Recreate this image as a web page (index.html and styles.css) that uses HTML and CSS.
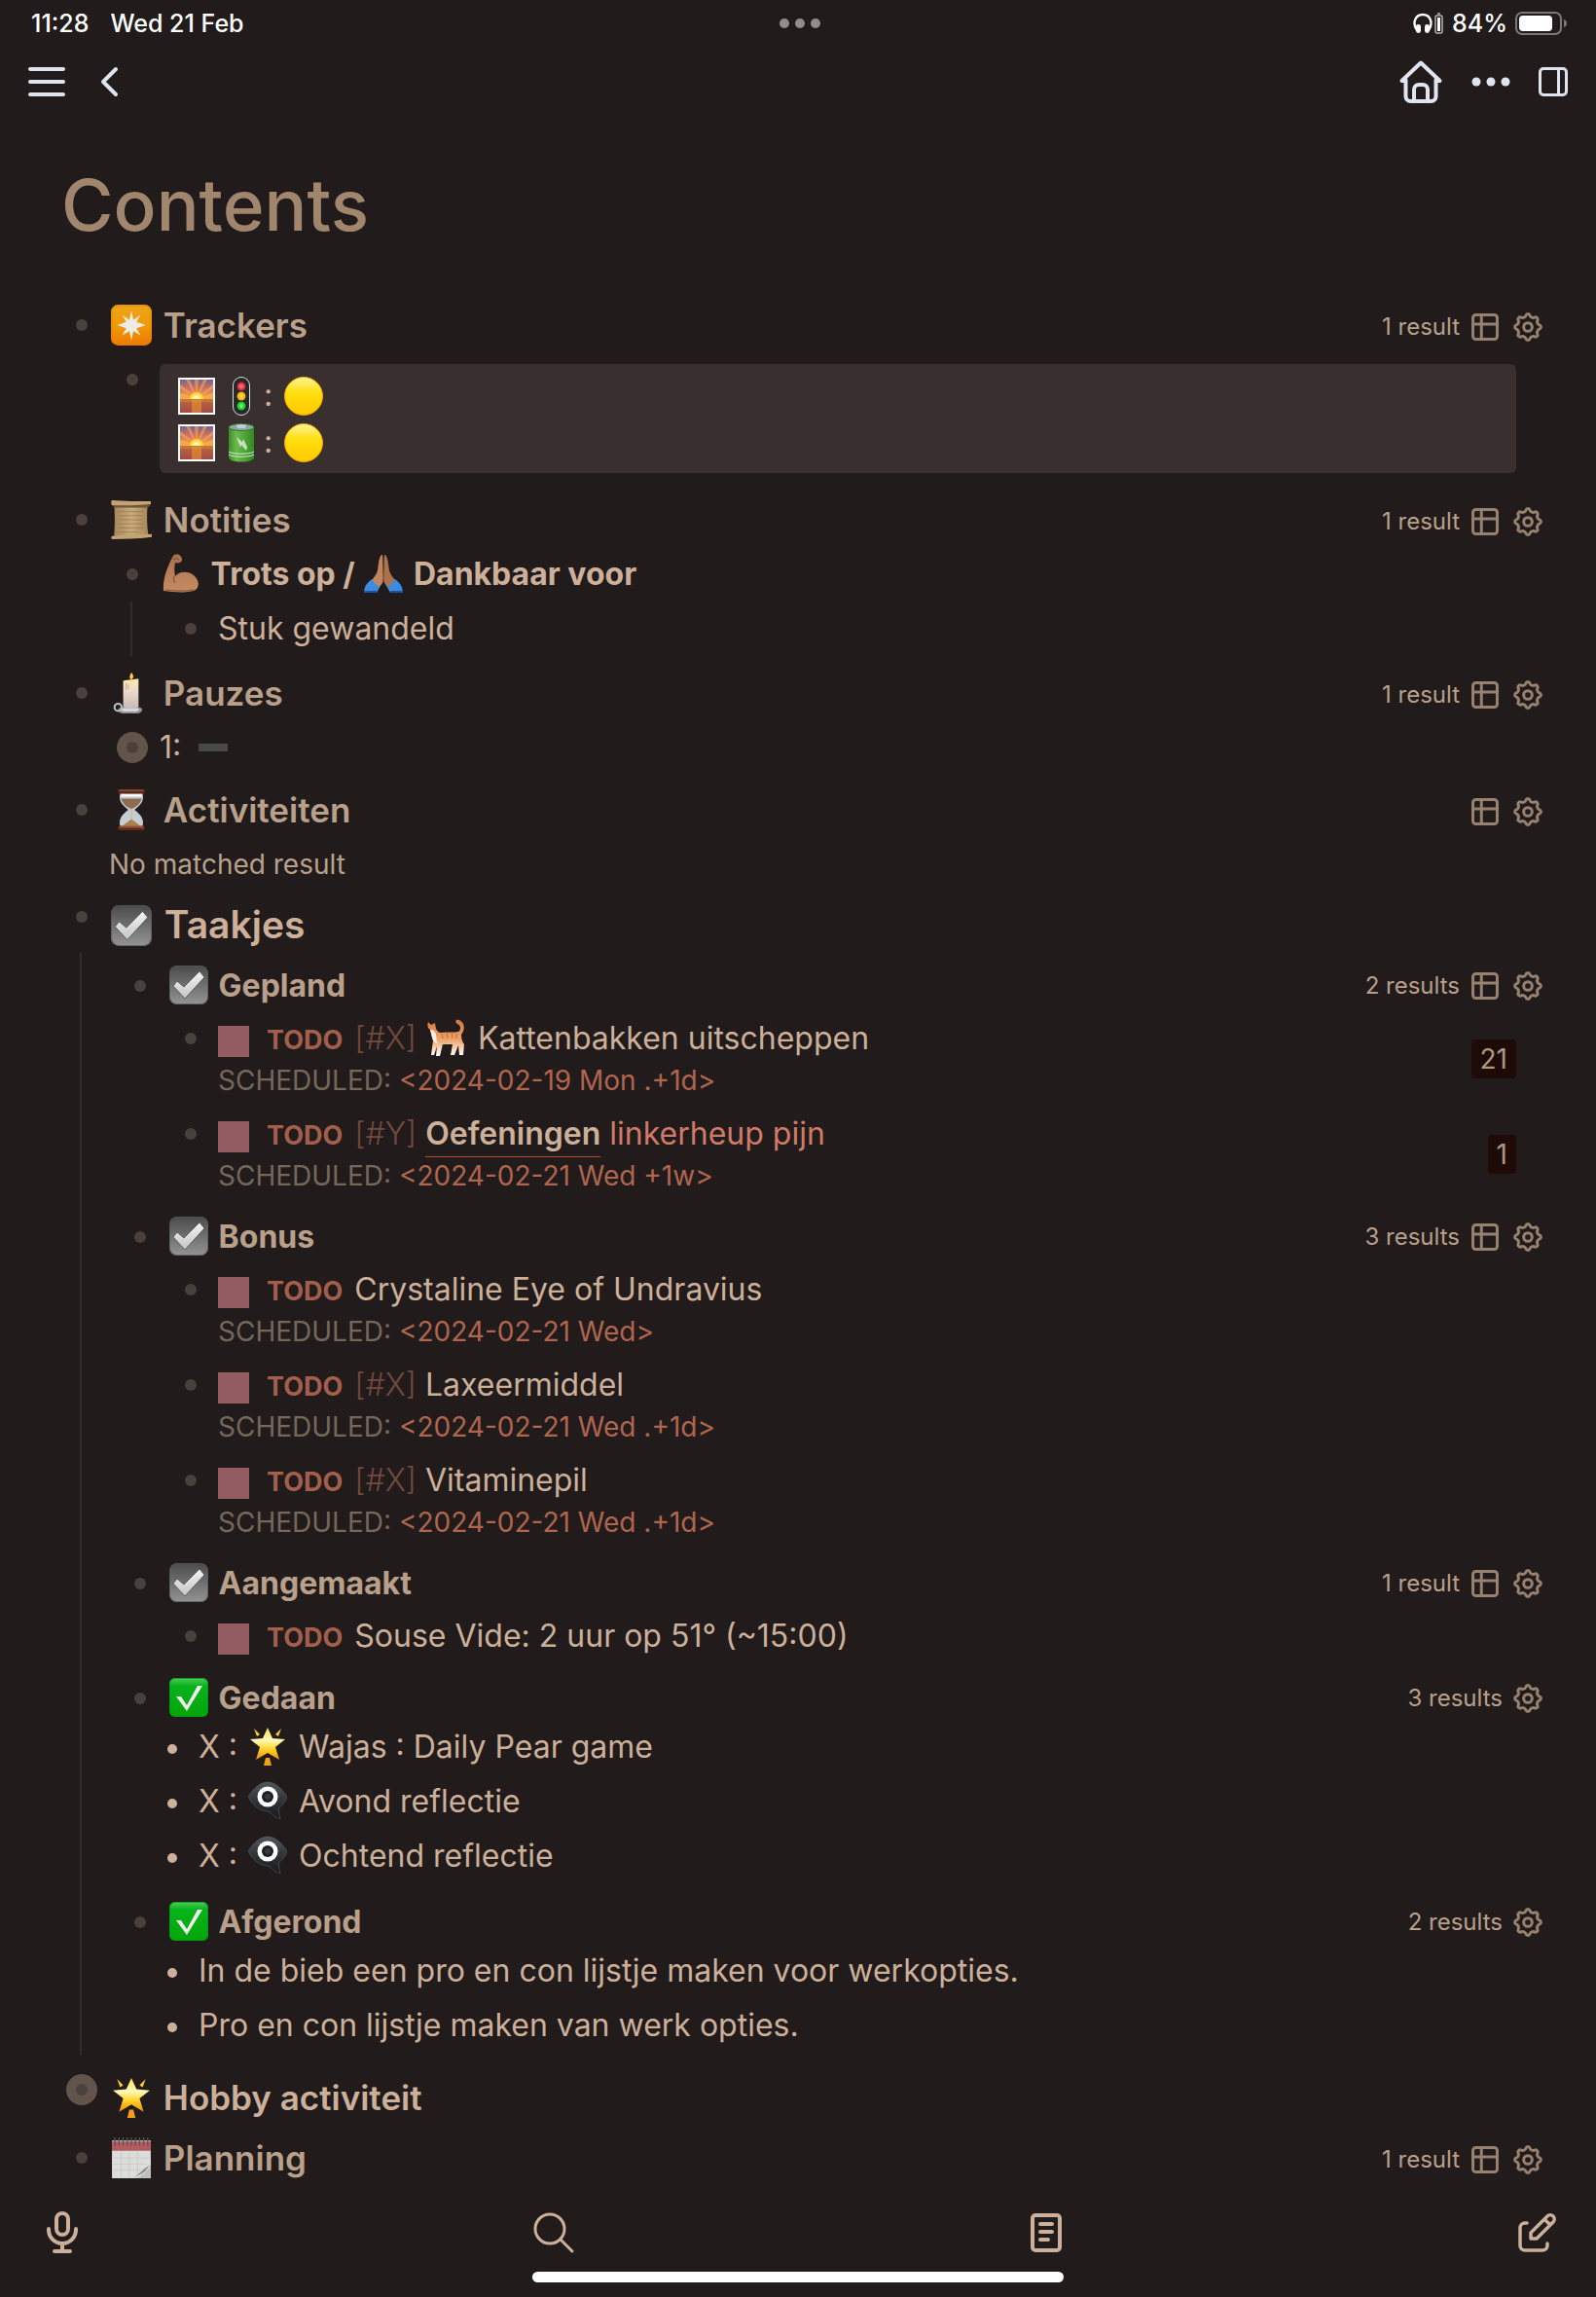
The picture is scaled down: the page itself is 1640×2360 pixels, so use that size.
FILE: index.html
```html
<!DOCTYPE html>
<html lang="nl">
<head>
<meta charset="utf-8">
<meta name="viewport" content="width=device-width, initial-scale=1">
<title>Contents</title>
<link rel="stylesheet" href="styles.css">
</head>
<body>
<svg class="defs" aria-hidden="true">
  <defs>
    <linearGradient id="g-orange" x1="0" y1="0" x2="0" y2="1"><stop offset="0" stop-color="#eda51c"/><stop offset=".5" stop-color="#f09a05"/><stop offset="1" stop-color="#ee7a00"/></linearGradient>
    <linearGradient id="g-grey" x1="0" y1="0" x2="0" y2="1"><stop offset="0" stop-color="#4b4b4b"/><stop offset="1" stop-color="#949494"/></linearGradient>
    <linearGradient id="g-tick" x1="0" y1="0" x2="0" y2="1"><stop offset="0" stop-color="#f4f4f4"/><stop offset="1" stop-color="#c4c4c4"/></linearGradient>
    <linearGradient id="g-green" x1="0" y1="0" x2="0" y2="1"><stop offset="0" stop-color="#4fce5a"/><stop offset=".2" stop-color="#08b31c"/><stop offset="1" stop-color="#04a508"/></linearGradient>
    <linearGradient id="g-sky" x1="0" y1="0" x2="0" y2="1"><stop offset="0" stop-color="#77608f"/><stop offset=".3" stop-color="#d9765f"/><stop offset=".66" stop-color="#ffc23a"/><stop offset=".7" stop-color="#d0763c"/><stop offset="1" stop-color="#94455a"/></linearGradient>
    <linearGradient id="g-yellow" x1="0" y1="0" x2="0" y2="1"><stop offset="0" stop-color="#fff59a"/><stop offset=".4" stop-color="#ffdf10"/><stop offset="1" stop-color="#ffc800"/></linearGradient>
    <linearGradient id="g-cell" x1="0" y1="0" x2="1" y2="0"><stop offset="0" stop-color="#3c8a2b"/><stop offset=".3" stop-color="#6cbb4c"/><stop offset="1" stop-color="#2f8a22"/></linearGradient>
    <linearGradient id="g-star" x1="0" y1="0" x2="0" y2="1"><stop offset="0" stop-color="#ffe04d"/><stop offset=".4" stop-color="#fff8b8"/><stop offset=".65" stop-color="#ffd62e"/><stop offset="1" stop-color="#ee8f0a"/></linearGradient>
    <linearGradient id="g-paper" x1="0" y1="0" x2="1" y2="0"><stop offset="0" stop-color="#a5865b"/><stop offset=".5" stop-color="#c9ab7c"/><stop offset="1" stop-color="#a78457"/></linearGradient>
    <linearGradient id="g-wax" x1="0" y1="0" x2="0" y2="1"><stop offset="0" stop-color="#ffe6a8"/><stop offset=".4" stop-color="#ecdccd"/><stop offset="1" stop-color="#c9b8b4"/></linearGradient>
    <linearGradient id="g-skin" x1="0" y1="0" x2="0" y2="1"><stop offset="0" stop-color="#a8714b"/><stop offset="1" stop-color="#c88c63"/></linearGradient>
    <linearGradient id="g-fur" x1="0" y1="0" x2="0" y2="1"><stop offset="0" stop-color="#d9763a"/><stop offset=".55" stop-color="#eda56c"/><stop offset="1" stop-color="#fff"/></linearGradient>
    <linearGradient id="g-dark" x1="0" y1="0" x2="0" y2="1"><stop offset="0" stop-color="#50565c"/><stop offset=".5" stop-color="#303438"/><stop offset="1" stop-color="#15171a"/></linearGradient>
    <radialGradient id="g-red-lamp"><stop offset="0" stop-color="#ff8a8a"/><stop offset="1" stop-color="#d3122a"/></radialGradient>
    <radialGradient id="g-yellow-lamp"><stop offset="0" stop-color="#ffe860"/><stop offset="1" stop-color="#f0a000"/></radialGradient>
    <radialGradient id="g-green-lamp"><stop offset="0" stop-color="#7dff70"/><stop offset="1" stop-color="#10b020"/></radialGradient>
  </defs>

  <symbol id="e-spark" viewBox="0 0 40 40">
    <rect width="40" height="40" rx="7" fill="url(#g-orange)"/>
    <rect x="1" y="1" width="38" height="38" rx="6" fill="none" stroke="#e07a00" stroke-opacity=".6"/>
    <path d="M20 6l2 9 7-5-4 7 9 3-9 3 4 7-7-4-2 9-2-9-7 4 4-7-9-3 9-3-4-7 7 5z" fill="#ecebe6"/>
  </symbol>
  <symbol id="e-sunrise" viewBox="0 0 40 40">
    <rect x="1" y="1" width="38" height="38" fill="#fff"/>
    <rect x="3" y="3" width="34" height="34" fill="url(#g-sky)"/>
    <path d="M20 22L3 8v4zM20 22L9 3h4zM20 22l-2-19h4zM20 22L27 3h4zM20 22L37 8v4zM20 22L3 17v3zM20 22l17-5v3z" fill="#ffb04a" opacity=".55"/>
    <path d="M13 23a7 7 0 0 1 14 0z" fill="#ffd93a"/>
    <path d="M16 23a4 4 0 0 1 8 0z" fill="#fff8a0"/>
    <rect x="3" y="23" width="34" height="14" fill="#a9503f" opacity=".65"/>
    <path d="M15 24h10v13H15z" fill="#f09a30" opacity=".55"/>
  </symbol>
  <symbol id="e-lights" viewBox="0 0 40 40">
    <rect x="11.500" y=".5" width="17" height="39" rx="8.500" fill="#25292b" stroke="#d9dcdc"/>
    <circle cx="20" cy="10" r="4.500" fill="url(#g-red-lamp)"/>
    <circle cx="20" cy="20" r="4.500" fill="url(#g-yellow-lamp)"/>
    <circle cx="20" cy="30" r="4.500" fill="url(#g-green-lamp)"/>
  </symbol>
  <symbol id="e-battery" viewBox="0 0 40 40">
    <path d="M7 4v31c0 6 26 6 26 0V4z" fill="url(#g-cell)"/>
    <ellipse cx="20" cy="4" rx="13" ry="3.500" fill="#8fa6a0" stroke="#2f7a26"/>
    <ellipse cx="20" cy="3" rx="5" ry="2" fill="#c3d0dc"/>
    <path d="M7 29c4 3 22 3 26 0M7 32c4 3 22 3 26 0" fill="none" stroke="#d7ecd0"/>
    <path d="M15 14l6 5 1-3 4 8-1 4-5-6-1 3z" fill="#c9dfc2"/>
  </symbol>
  <symbol id="e-yellow" viewBox="0 0 40 40">
    <circle cx="20" cy="20" r="19.500" fill="url(#g-yellow)" stroke="#eca900"/>
  </symbol>
  <symbol id="e-scroll" viewBox="0 0 40 40">
    <path d="M3 4h33c-1 10-1 22 1 33H3c1-11 1-23 0-33z" fill="url(#g-paper)"/>
    <path d="M1 1c12 1 25 1 38 1v3c-13 1-26 1-38 1-1-2-1-4 0-5zM1 36c12-1 25-1 39-2v3c-14 2-27 2-39 2-1-1-1-2 0-3z" fill="#c4a474"/>
    <path d="M1 6c12 0 25 0 38-1l-3 3H4z" fill="#6f5537"/>
    <path d="M7 12h25M7 16h25M7 20h24M7 24h25M7 28h25M7 32h20" stroke="#8e7048" stroke-width=".8" opacity=".7"/>
  </symbol>
  <symbol id="e-arm" viewBox="0 0 40 40">
    <path d="M12 2c3-3 9-1 9 4 0 3-4 4-7 3-1 5-1 10 0 14 4-5 13-6 19-1 6 5 6 12 2 15-8 4-22 2-33 1-1-12 4-25 10-36z" fill="url(#g-skin)"/>
    <path d="M13 23c-1 3-1 5 1 7M12 6c3-2 5-1 6 1M4 37c9 1 20 2 29 0" fill="none" stroke="#855335" stroke-width="1.200"/>
  </symbol>
  <symbol id="e-pray" viewBox="0 0 40 40">
    <path d="M0 39c1-8 5-11 10-14l8 6-5 9H1zM40 39c-1-8-5-11-10-14l-8 6 5 9h12z" fill="#3b8be0"/>
    <path d="M0 39h13M27 39h13" stroke="#1b539c" stroke-width="2"/>
    <path d="M19 1c-3-1-4 9-5 16-1 5-5 7-5 11l6 6c3-2 5-5 5-8z" fill="#c08560"/>
    <path d="M21 1c3-1 4 9 5 16 1 5 5 7 5 11l-6 6c-3-2-5-5-5-8z" fill="#ac724e"/>
    <path d="M20 3v25" stroke="#6e4229"/>
  </symbol>
  <symbol id="e-candle" viewBox="0 0 40 40">
    <path d="M11 34h16c5 0 5 5-1 6H11c-5-1-5-6 0-6z" fill="#8f9598"/>
    <path d="M12 35h14c3 1 2 2-1 3H12c-3-1-3-2 0-3z" fill="#d5d8da"/>
    <circle cx="7" cy="34" r="3.500" fill="none" stroke="#b8bdc0" stroke-width="2"/>
    <path d="M12 8c4-1 12-1 15-2v28c-4 2-11 2-15 0z" fill="url(#g-wax)"/>
    <path d="M20 7c-3-2-1-5 0-7 2 2 3 5 0 7z" fill="#ffcf3c"/>
    <path d="M15 10v7M17 12v4" stroke="#bfa79a"/>
  </symbol>
  <symbol id="e-hourglass" viewBox="0 0 40 40">
    <path d="M9 4h22c2 8-3 12-8 16 5 4 10 8 8 16H9c-2-8 3-12 8-16C12 16 7 12 9 4z" fill="#c4ccd6"/>
    <path d="M10 9h20c-1 5-5 8-10 10-5-2-9-5-10-10z" fill="#8d6b4b"/>
    <path d="M20 19v10l9 7H11l9-7z" fill="#a88048"/>
    <path d="M20 19v11" stroke="#d7b578"/>
    <path d="M10 6h20" stroke="#fff" stroke-width="2"/>
    <path d="M7 0h26v4H7zM7 36h26v4H7z" fill="#5c2a16"/>
    <path d="M8 1h24M8 37h24" stroke="#a75c3a"/>
  </symbol>
  <symbol id="e-check-grey" viewBox="0 0 40 40">
    <rect width="40" height="40" rx="8" fill="url(#g-grey)"/>
    <rect x=".5" y=".5" width="39" height="39" rx="7.500" fill="none" stroke="#555" stroke-opacity=".7"/>
    <path d="M4 21l4-5 7 6L31 6l5 6-20 22z" fill="url(#g-tick)" stroke="#4c4c4c" stroke-width=".8"/>
  </symbol>
  <symbol id="e-check-green" viewBox="0 0 40 40">
    <rect width="40" height="40" rx="6" fill="url(#g-green)"/>
    <rect x=".5" y=".5" width="39" height="39" rx="5.500" fill="none" stroke="#078f12" stroke-opacity=".7"/>
    <path d="M7 19h5l6 9L29 8h5L18 34z" fill="#ecefec"/>
  </symbol>
  <symbol id="e-cat" viewBox="0 0 40 40">
    <path d="M1 4l3 3 4-2 1 6c1 2 3 4 5 4 7-1 13 0 18-1 3-2 3-6-1-8-3-2-2-5 2-4 6 3 6 10 2 15 0 5 1 7 3 10l-1 11h-4l-1-10-4 10h-4l2-11H16l-3 12H9l1-10-3 9H4l2-15c-2-4-2-8-3-11C0 10 0 7 1 4z" fill="url(#g-fur)"/>
    <path d="M3 12c4 0 5 2 6 5 1 4 0 6 2 9-2 0-4-1-5-3-1-4-2-7-3-11z" fill="#f6eee6"/>
    <path d="M15 16l1 5M20 15l1 6M25 15l1 6M30 16v5" stroke="#c96a2e"/>
  </symbol>
  <symbol id="e-star" viewBox="0 0 40 40">
    <path d="M20 1l5 11 13 1-10 8 4 13-12-7-12 7 4-13L2 13l13-1z" fill="url(#g-star)"/>
    <path d="M6 2l6 6-3 2zM34 2l-6 6 3 2z" fill="#ffcf3a"/>
    <path d="M18 32h4l2 8h-8z" fill="#f0a01e"/>
  </symbol>
  <symbol id="e-eye" viewBox="0 0 40 40">
    <path d="M0 16C7 5 14 1 20 1s13 4 20 15c-2 6-6 10-9 12l2 11C28 37 24 34 21 31 12 31 5 25 0 16z" fill="url(#g-dark)" stroke="#5b6167" stroke-width=".6"/>
    <circle cx="20" cy="16" r="10.500" fill="#fff"/>
    <circle cx="20" cy="16" r="6" fill="#1d2023"/>
    <circle cx="20" cy="16" r="3" fill="#35393d"/>
  </symbol>
  <symbol id="e-calendar" viewBox="0 0 40 40">
    <path d="M1 3h38v37H1z" fill="#dcdcda"/>
    <path d="M1 4h38v9H1z" fill="#b25a5c"/>
    <path d="M4 0v8M8 0v8M12 0v8M16 0v8M20 0v8M24 0v8M28 0v8M32 0v8M36 0v8" stroke="#55565a" stroke-width="1.200"/>
    <path d="M3 20h34M3 26h32M3 32h26M10 14v25M18 14v25M26 14v22" stroke="#c4c4c2" stroke-width=".7"/>
    <path d="M21 40c7-3 9-9 18-13-4 3-4 6-8 8z" fill="#8d8d8d"/>
    <path d="M24 40c7-2 10-6 15-12v12z" fill="#bdbdbd"/>
  </symbol>

  <symbol id="i-table" viewBox="0 0 24 24">
    <rect x="3.700" y="3.700" width="16.600" height="16.600" rx="2"/><path d="M3.700 10h16.600M9.500 3.700v16.600"/>
  </symbol>
  <symbol id="i-gear" viewBox="-12 -12 24 24">
    <path d="M-1.390-7.880A1.450 1.450 0 0 1 1.390-7.880A2.400 2.400 0 0 0 4.590-6.550A1.450 1.450 0 0 1 6.550-4.590A2.400 2.400 0 0 0 7.880-1.390A1.450 1.450 0 0 1 7.880 1.390A2.400 2.400 0 0 0 6.550 4.590A1.450 1.450 0 0 1 4.590 6.550A2.400 2.400 0 0 0 1.390 7.880A1.450 1.450 0 0 1-1.390 7.880A2.400 2.400 0 0 0-4.590 6.550A1.450 1.450 0 0 1-6.550 4.590A2.400 2.400 0 0 0-7.880 1.390A1.450 1.450 0 0 1-7.880-1.390A2.400 2.400 0 0 0-6.550-4.590A1.450 1.450 0 0 1-4.590-6.550A2.400 2.400 0 0 0-1.390-7.880z"/>
    <circle r="2.900"/>
  </symbol>
</svg>

<div class="page">
  <div class="status">
    <div class="status-side"><span>11:28</span><span>Wed 21 Feb</span></div>
    <svg class="status-dots" viewBox="0 0 42 10" aria-hidden="true"><circle cx="5" cy="5" r="5"/><circle cx="21" cy="5" r="5"/><circle cx="37" cy="5" r="5"/></svg>
    <div class="status-side status-end">
      <svg class="phones" viewBox="0 0 32 22" aria-hidden="true">
        <path d="M4 18C-1 11 2 2 10 2s11 9 6 16" fill="none" stroke="#fff" stroke-width="2.400"/>
        <rect x="3" y="12" width="5" height="9" rx="2.400" fill="#fff"/><rect x="12" y="12" width="5" height="9" rx="2.400" fill="#fff"/>
        <rect x="23" y="3" width="7" height="18" rx="1" fill="none" stroke="#fff"/><rect x="25" y="5" width="3" height="14" fill="#fff"/><path d="M25 1h3" stroke="#fff"/>
      </svg>
      <span>84%</span>
      <svg class="battery" viewBox="0 0 54 24" aria-hidden="true">
        <rect x="1" y="1" width="46" height="22" rx="6" fill="none" stroke="#7d7877" stroke-width="2"/>
        <rect x="4" y="4" width="34" height="16" rx="4" fill="#fff"/>
        <path d="M50 8c4 1 4 7 0 8z" fill="#7d7877"/>
      </svg>
    </div>
  </div>

  <header class="toolbar">
    <div class="tool-group">
      <button class="tool" aria-label="Menu"><svg viewBox="0 0 48 48"><path d="M7 11h34M7 24h34M7 37h34"/></svg></button>
      <button class="tool" aria-label="Back"><svg viewBox="0 0 48 48"><path d="M29 11L16 24l13 13"/></svg></button>
    </div>
    <div class="tool-group tool-end">
      <button class="tool home" aria-label="Home"><svg viewBox="0 0 48 48"><path d="M8 23H4.500L24 4.500 43.500 23H40M8.500 22v17a5 5 0 0 0 5 5h21a5 5 0 0 0 5-5V22M17 43V32a5 5 0 0 1 5-5h4a5 5 0 0 1 5 5v11"/></svg></button>
      <button class="tool" aria-label="More"><svg viewBox="0 0 48 48"><g class="solid"><circle cx="9" cy="24" r="4.500"/><circle cx="24" cy="24" r="4.500"/><circle cx="39" cy="24" r="4.500"/></g></svg></button>
      <button class="tool" aria-label="Toggle right sidebar"><svg viewBox="0 0 48 48"><rect x="10.500" y="10.500" width="27" height="27" rx="3.500" stroke-width="3"/><path d="M29.500 10.500v27" stroke-width="3"/></svg></button>
    </div>
  </header>

  <main class="content">
    <h1 class="title">Contents</h1>

    <section class="block">
      <div class="row">
        <span class="bullet"></span>
        <h2 class="heading dim"><svg class="emoji"><use href="#e-spark"/></svg> Trackers</h2>
        <div class="results"><span>1 result</span><button aria-label="Table view"><svg><use href="#i-table"/></svg></button><button aria-label="Query settings"><svg><use href="#i-gear"/></svg></button></div>
      </div>
      <div class="nest tracker-row">
        <span class="bullet"></span>
        <div class="tracker">
          <div><svg class="emoji"><use href="#e-sunrise"/></svg><svg class="emoji"><use href="#e-lights"/></svg>: <svg class="emoji"><use href="#e-yellow"/></svg></div>
          <div><svg class="emoji"><use href="#e-sunrise"/></svg><svg class="emoji"><use href="#e-battery"/></svg>: <svg class="emoji"><use href="#e-yellow"/></svg></div>
        </div>
      </div>
    </section>

    <section class="block gap-large">
      <div class="row">
        <span class="bullet"></span>
        <h2 class="heading dim"><svg class="emoji"><use href="#e-scroll"/></svg> Notities</h2>
        <div class="results"><span>1 result</span><button aria-label="Table view"><svg><use href="#i-table"/></svg></button><button aria-label="Query settings"><svg><use href="#i-gear"/></svg></button></div>
      </div>
      <div class="nest">
        <div class="row">
          <span class="bullet"></span>
          <p class="text strong"><svg class="emoji"><use href="#e-arm"/></svg> Trots op / <svg class="emoji"><use href="#e-pray"/></svg> Dankbaar voor</p>
        </div>
        <div class="children">
          <div class="row"><span class="bullet"></span><p class="text">Stuk gewandeld</p></div>
        </div>
      </div>
    </section>

    <section class="block gap">
      <div class="row">
        <span class="bullet"></span>
        <h2 class="heading dim"><svg class="emoji"><use href="#e-candle"/></svg> Pauzes</h2>
        <div class="results"><span>1 result</span><button aria-label="Table view"><svg><use href="#i-table"/></svg></button><button aria-label="Query settings"><svg><use href="#i-gear"/></svg></button></div>
      </div>
      <div class="nest">
        <div class="row"><span class="bullet closed"></span><p class="text">1:</p><span class="dash"></span></div>
      </div>
    </section>

    <section class="block gap-small">
      <div class="row">
        <span class="bullet"></span>
        <h2 class="heading dim"><svg class="emoji"><use href="#e-hourglass"/></svg> Activiteiten</h2>
        <div class="results"><button aria-label="Table view"><svg><use href="#i-table"/></svg></button><button aria-label="Query settings"><svg><use href="#i-gear"/></svg></button></div>
      </div>
      <p class="empty">No matched result</p>
    </section>

    <section class="block gap-tiny">
      <div class="row raised">
        <span class="bullet"></span>
        <h2 class="heading big"><svg class="emoji"><use href="#e-check-grey"/></svg> Taakjes</h2>
      </div>
      <div class="children tasks">

        <div class="row sub">
          <span class="bullet"></span>
          <h3 class="text strong dim"><svg class="emoji"><use href="#e-check-grey"/></svg> Gepland</h3>
          <div class="results"><span>2 results</span><button aria-label="Table view"><svg><use href="#i-table"/></svg></button><button aria-label="Query settings"><svg><use href="#i-gear"/></svg></button></div>
        </div>
        <div class="nest">
          <div class="task">
            <span class="bullet"></span>
            <div class="task-body">
              <div class="task-line"><input type="checkbox" id="t1" class="box"><label for="t1"><a class="todo" href="#todo">TODO</a> <a class="prio" href="#x">[#X]</a> <svg class="emoji"><use href="#e-cat"/></svg> Kattenbakken uitscheppen</label></div>
              <div class="schedule">SCHEDULED: <time>&lt;2024-02-19 Mon .+1d&gt;</time></div>
            </div>
            <a class="count" href="#refs">21</a>
          </div>
          <div class="task">
            <span class="bullet"></span>
            <div class="task-body">
              <div class="task-line"><input type="checkbox" id="t2" class="box"><label for="t2"><a class="todo" href="#todo">TODO</a> <a class="prio" href="#y">[#Y]</a> <a class="ref" href="#oefeningen">Oefeningen</a> <a class="tag" href="#linkerheup">linkerheup pijn</a></label></div>
              <div class="schedule">SCHEDULED: <time>&lt;2024-02-21 Wed +1w&gt;</time></div>
            </div>
            <a class="count" href="#refs">1</a>
          </div>
        </div>

        <div class="row sub gap-small">
          <span class="bullet"></span>
          <h3 class="text strong dim"><svg class="emoji"><use href="#e-check-grey"/></svg> Bonus</h3>
          <div class="results"><span>3 results</span><button aria-label="Table view"><svg><use href="#i-table"/></svg></button><button aria-label="Query settings"><svg><use href="#i-gear"/></svg></button></div>
        </div>
        <div class="nest">
          <div class="task">
            <span class="bullet"></span>
            <div class="task-body">
              <div class="task-line"><input type="checkbox" id="t3" class="box"><label for="t3"><a class="todo" href="#todo">TODO</a> Crystaline Eye of Undravius</label></div>
              <div class="schedule">SCHEDULED: <time>&lt;2024-02-21 Wed&gt;</time></div>
            </div>
          </div>
          <div class="task">
            <span class="bullet"></span>
            <div class="task-body">
              <div class="task-line"><input type="checkbox" id="t4" class="box"><label for="t4"><a class="todo" href="#todo">TODO</a> <a class="prio" href="#x">[#X]</a> Laxeermiddel</label></div>
              <div class="schedule">SCHEDULED: <time>&lt;2024-02-21 Wed .+1d&gt;</time></div>
            </div>
          </div>
          <div class="task">
            <span class="bullet"></span>
            <div class="task-body">
              <div class="task-line"><input type="checkbox" id="t5" class="box"><label for="t5"><a class="todo" href="#todo">TODO</a> <a class="prio" href="#x">[#X]</a> Vitaminepil</label></div>
              <div class="schedule">SCHEDULED: <time>&lt;2024-02-21 Wed .+1d&gt;</time></div>
            </div>
          </div>
        </div>

        <div class="row sub gap-small">
          <span class="bullet"></span>
          <h3 class="text strong dim"><svg class="emoji"><use href="#e-check-grey"/></svg> Aangemaakt</h3>
          <div class="results"><span>1 result</span><button aria-label="Table view"><svg><use href="#i-table"/></svg></button><button aria-label="Query settings"><svg><use href="#i-gear"/></svg></button></div>
        </div>
        <div class="nest">
          <div class="task short">
            <span class="bullet"></span>
            <div class="task-body">
              <div class="task-line"><input type="checkbox" id="t6" class="box"><label for="t6"><a class="todo" href="#todo">TODO</a> Souse Vide: 2 uur op 51° (~15:00)</label></div>
            </div>
          </div>
        </div>

        <div class="row sub gap-small">
          <span class="bullet"></span>
          <h3 class="text strong dim"><svg class="emoji"><use href="#e-check-green"/></svg> Gedaan</h3>
          <div class="results"><span>3 results</span><button aria-label="Query settings"><svg><use href="#i-gear"/></svg></button></div>
        </div>
        <ul class="list">
          <li>X : <svg class="emoji"><use href="#e-star"/></svg> Wajas : Daily Pear game</li>
          <li>X : <svg class="emoji"><use href="#e-eye"/></svg> Avond reflectie</li>
          <li>X : <svg class="emoji"><use href="#e-eye"/></svg> Ochtend reflectie</li>
        </ul>

        <div class="row sub gap-medium">
          <span class="bullet"></span>
          <h3 class="text strong dim"><svg class="emoji"><use href="#e-check-green"/></svg> Afgerond</h3>
          <div class="results"><span>2 results</span><button aria-label="Query settings"><svg><use href="#i-gear"/></svg></button></div>
        </div>
        <ul class="list">
          <li>In de bieb een pro en con lijstje maken voor werkopties.</li>
          <li>Pro en con lijstje maken van werk opties.</li>
        </ul>
      </div>
    </section>

    <section class="block gap-medium">
      <div class="row raised">
        <span class="bullet closed"></span>
        <h2 class="heading"><svg class="emoji"><use href="#e-star"/></svg> Hobby activiteit</h2>
      </div>
    </section>

    <section class="block gap-tiny">
      <div class="row">
        <span class="bullet"></span>
        <h2 class="heading dim"><svg class="emoji"><use href="#e-calendar"/></svg> Planning</h2>
        <div class="results"><span>1 result</span><button aria-label="Table view"><svg><use href="#i-table"/></svg></button><button aria-label="Query settings"><svg><use href="#i-gear"/></svg></button></div>
      </div>
    </section>
  </main>

  <footer class="bottom">
    <nav class="actions">
      <button aria-label="Record"><svg viewBox="0 0 48 48"><rect x="18" y="4" width="12" height="22" rx="6"/><path d="M10 20v1a14 14 0 0 0 28 0v-1M24 35v8M16 43h16"/></svg></button>
      <button aria-label="Search"><svg viewBox="0 0 48 48"><circle cx="20" cy="20" r="15" stroke-width="3"/><path d="M31 31l12 12" stroke-width="3"/></svg></button>
      <button aria-label="Journals"><svg viewBox="0 0 48 48"><rect x="10" y="6" width="28" height="36" rx="3"/><path d="M18 15h12M18 23h12M18 31h8"/></svg></button>
      <button aria-label="Edit"><svg viewBox="0 0 48 48"><path d="M13 14h-2a5 5 0 0 0-5 5v18a5 5 0 0 0 5 5h18a5 5 0 0 0 5-5v-2M17 30h6l17-17a4.200 4.200 0 0 0-6-6L17 24zM31 10l6 6" stroke-width="3.500"/></svg></button>
    </nav>
    <div class="home-bar"></div>
  </footer>
</div>
</body>
</html>
```

FILE: styles.css
```css
* {
  box-sizing: border-box;
}

body {
  margin: 0;
  background: #211b1b;
  color: #ccb09a;
  font: 400 32px/56px Inter, "Liberation Sans", sans-serif;
}

h1, h2, h3, p, ul {
  margin: 0;
  font-size: 32px;
  font-weight: 400;
}

a {
  color: inherit;
  text-decoration: none;
}

button {
  display: block;
  padding: 0;
  border: 0;
  background: none;
  color: inherit;
}

button svg {
  display: block;
  fill: none;
  stroke: currentColor;
  stroke-width: 4px;
  stroke-linecap: round;
  stroke-linejoin: round;
}

.defs {
  position: absolute;
  width: 0;
  height: 0;
}

.page {
  display: flex;
  flex-direction: column;
  min-height: 100vh;
}

/* Status bar */
.status {
  display: grid;
  grid-template-columns: 1fr auto 1fr;
  align-items: center;
  height: 48px;
  padding: 0 29px 0 32px;
  color: #fff;
  font-size: 25px;
  font-weight: 500;
  line-height: 32px;
}

.status-side {
  display: flex;
  align-items: center;
  gap: 22px;
}

.status-end {
  justify-content: flex-end;
  gap: 8px;
}

.status-dots {
  width: 42px;
  height: 10px;
  fill: #928c8c;
}

.phones {
  width: 32px;
  height: 22px;
}

.battery {
  width: 54px;
  height: 24px;
}

/* Toolbar */
.toolbar {
  display: flex;
  justify-content: space-between;
  height: 72px;
  padding: 0 20px 0 24px;
  color: #dfe4ee;
}

.tool-group {
  display: flex;
  align-items: center;
  gap: 18px;
}

.tool-end {
  gap: 16px;
}

.tool.home {
  margin-right: 8px;
}

.tool svg {
  width: 48px;
  height: 48px;
}

.tool .solid {
  fill: currentColor;
  stroke: none;
}

/* Page body */
.content {
  flex: 1;
  padding: 46px 52px 0 68px;
}

.title {
  margin: 0 0 50px -5px;
  color: #a1866d;
  font-size: 73px;
  font-weight: 500;
  line-height: 90px;
}

.row {
  display: flex;
  align-items: center;
  gap: 12px;
  min-height: 56px;
}

.bullet {
  display: flex;
  flex: none;
  align-items: center;
  justify-content: center;
  width: 32px;
  height: 32px;
  border-radius: 50%;
}

.bullet::before {
  width: 12px;
  height: 12px;
  border-radius: 50%;
  background: #4a403c;
  content: "";
}

.bullet.closed {
  background: #62544b;
}

.raised .bullet {
  margin-bottom: 16px;
}

.heading {
  font-size: 35px;
  font-weight: 600;
}

.heading.big {
  font-size: 39px;
}

.strong {
  font-weight: 700;
}

.dim {
  color: #b9a08b;
}

.emoji {
  width: 40px;
  height: 40px;
  margin: 0 3px 0 2px;
  vertical-align: -8px;
}

.heading .emoji {
  width: 42px;
  height: 42px;
}

.nest {
  margin-left: 52px;
}

.children {
  margin-left: 14px;
  padding-left: 44px;
  border-left: 2px solid #332c2b;
}

.tasks {
  padding-top: 7px;
  padding-bottom: 6px;
}

.gap-tiny {
  margin-top: 6px;
}

.gap-small {
  margin-top: 8px;
}

.gap {
  margin-top: 10px;
}

.gap-medium {
  margin-top: 16px;
}

.gap-large {
  margin-top: 20px;
}

/* Query result controls */
.results {
  display: flex;
  align-items: center;
  gap: 8px;
  margin-left: auto;
  padding-top: 4px;
  color: #b9a08b;
  font-size: 24px;
  line-height: 36px;
}

.results button {
  color: #97816f;
}

.results svg {
  width: 36px;
  height: 36px;
  stroke-width: 2px;
}

.sub {
  min-height: 54px;
  padding-top: 2px;
  line-height: 52px;
}

.sub .results {
  padding-top: 0;
}

/* Trackers */
.tracker-row {
  display: flex;
  gap: 12px;
  padding: 12px 30px 0 0;
}

.tracker {
  flex: 1;
  padding: 8px 15px;
  border-radius: 6px;
  background: #382f2e;
  line-height: 48px;
}

.tracker .emoji {
  margin: 0 3px;
  vertical-align: -10px;
}

.dash {
  width: 30px;
  height: 8px;
  margin-left: 6px;
  background: #484848;
}

.empty {
  padding-left: 44px;
  color: #b9a08b;
  font-size: 28px;
}

/* Tasks */
.task {
  display: flex;
  gap: 12px;
  height: 98px;
  padding-right: 30px;
}

.task.short {
  height: 56px;
}

.task .bullet {
  margin-top: 12px;
}

.task-body {
  flex: 1;
}

.task-line {
  display: flex;
  align-items: center;
  gap: 18px;
}

.box {
  width: 32px;
  height: 32px;
  margin: 4px 0 0;
  appearance: none;
  background: #935c63;
}

.todo {
  margin-right: 3px;
  color: #a35f4c;
  font-size: 27px;
  font-weight: 700;
}

.prio {
  color: #73493f;
  font-weight: 300;
}

.ref {
  padding-bottom: 4px;
  border-bottom: 1px solid #b04a38;
  font-weight: 600;
}

.tag {
  color: #d07a68;
}

.schedule {
  margin-top: -3px;
  color: #75685a;
  font-size: 28px;
  line-height: 32px;
}

.schedule time {
  color: #b0654f;
}

.count {
  align-self: center;
  padding: 0 9px;
  border-radius: 4px;
  background: #1e0b07;
  color: #ac9780;
  font-size: 28px;
  line-height: 40px;
}

.list {
  display: grid;
  gap: 8px;
  padding-left: 44px;
  line-height: 48px;
  list-style: none;
}

.list li::before {
  display: inline-block;
  width: 10px;
  height: 10px;
  margin-right: 22px;
  border-radius: 50%;
  background: #ccb09a;
  vertical-align: 4px;
  content: "";
}

/* Bottom bar */
.bottom {
  display: flex;
  flex-direction: column;
  align-items: center;
  gap: 16px;
  padding: 0 40px 15px;
}

.actions {
  display: flex;
  align-self: stretch;
  justify-content: space-between;
  margin-right: -4px;
}

.actions svg {
  width: 48px;
  height: 48px;
}

.home-bar {
  width: 35%;
  height: 11px;
  border-radius: 6px;
  background: #fff;
}
```
